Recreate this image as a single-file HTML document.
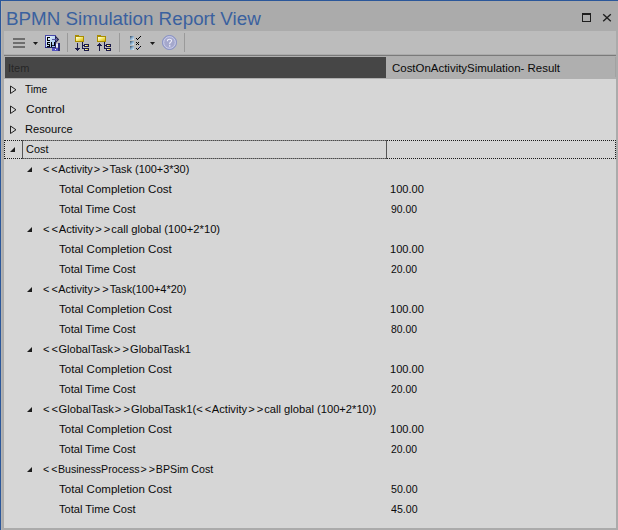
<!DOCTYPE html>
<html><head><meta charset="utf-8">
<style>
html,body{margin:0;padding:0;}
body{width:618px;height:530px;overflow:hidden;position:relative;background:#ababab;font-family:"Liberation Sans",sans-serif;}
.abs{position:absolute;}
.t{position:absolute;font-size:11px;line-height:20px;height:20px;white-space:nowrap;color:#0a0a0a;transform-origin:0 0;}
.tri{position:absolute;}
.b1{margin-right:2px}.b2{margin-right:0.5px}.b3{margin-left:1px;margin-right:2px}.b4{margin-right:1px}
#title{position:absolute;left:6.00px;top:6px;font-size:18px;line-height:26px;color:#3a619f;white-space:nowrap;transform-origin:0 0;transform:scaleX(1.0450);}
</style></head><body>
<div class="abs" style="left:0;top:0;width:618px;height:1px;background:#2b579a"></div>
<div class="abs" style="left:0;top:0;width:1px;height:530px;background:#2b579a"></div>
<div class="abs" style="left:1px;top:1px;width:1px;height:529px;background:#b3b3b3"></div>
<div id="title">BPMN Simulation Report View</div>
<!-- window buttons -->
<div class="abs" style="left:582px;top:13px;width:7px;height:6px;border:1px solid #1e1e1e;border-top-width:2px"></div>
<svg class="abs" style="left:602px;top:13px" width="10" height="10"><path d="M1.2 1.3 L8.8 8.2 M8.8 1.3 L1.2 8.2" stroke="#1e1e1e" stroke-width="1.35"/></svg>
<!-- toolbar -->
<div class="abs" style="left:4px;top:31px;width:612px;height:23px;background:#bcbcbc"></div>
<svg class="abs" style="left:0;top:0" width="618" height="56" viewBox="0 0 618 56">
<defs>
<linearGradient id="fy" x1="0" y1="0" x2="1" y2="1"><stop offset="0" stop-color="#ffffff"/><stop offset="0.35" stop-color="#f8f090"/><stop offset="1" stop-color="#dcbc00"/></linearGradient>
<linearGradient id="ry" x1="0" y1="0" x2="1" y2="0"><stop offset="0" stop-color="#fffff0"/><stop offset="1" stop-color="#e0c000"/></linearGradient>
<linearGradient id="cb" x1="0" y1="0" x2="1" y2="1"><stop offset="0" stop-color="#f2f8ff"/><stop offset="1" stop-color="#8fbce8"/></linearGradient>
<linearGradient id="sq" x1="0" y1="0" x2="1" y2="1"><stop offset="0" stop-color="#3a4654"/><stop offset="0.5" stop-color="#8cb0d0"/><stop offset="1" stop-color="#e4f4ff"/></linearGradient>
</defs>
<g shape-rendering="crispEdges">
<rect x="13" y="38" width="12" height="2" fill="#6e6e6e"/>
<rect x="13" y="42" width="12" height="2" fill="#6e6e6e"/>
<rect x="13" y="46" width="12" height="2" fill="#6e6e6e"/>
<rect x="67" y="33" width="1" height="19" fill="#9a9a9a"/>
<rect x="119" y="33" width="1" height="19" fill="#9a9a9a"/>
<rect x="184" y="33" width="1" height="19" fill="#9a9a9a"/>
</g>
<path d="M33 42 H38 L35.5 45 Z" fill="#1a1a1a"/>
<path d="M150 42 H155 L152.5 45 Z" fill="#1a1a1a"/>
<!-- CSV icon -->
<g shape-rendering="crispEdges">
<rect x="45" y="35" width="11" height="13" fill="#4848a8"/>
<rect x="46" y="36" width="9" height="11" fill="url(#cb)"/>
<rect x="55" y="36" width="1" height="12" fill="#24246c"/>
<rect x="45" y="47" width="11" height="1" fill="#24246c"/>
<!-- C -->
<rect x="47" y="37" width="3" height="1" fill="#000"/>
<rect x="47" y="38" width="1" height="2" fill="#000"/>
<rect x="47" y="40" width="3" height="1" fill="#000"/>
<!-- S -->
<rect x="47" y="42" width="3" height="1" fill="#000"/>
<rect x="47" y="43" width="1" height="1" fill="#000"/>
<rect x="47" y="44" width="3" height="1" fill="#000"/>
<rect x="49" y="45" width="1" height="1" fill="#000"/>
<rect x="47" y="46" width="3" height="1" fill="#000"/>
<!-- W -->
<rect x="51" y="42" width="1" height="5" fill="#000"/>
<rect x="54" y="42" width="1" height="4" fill="#000"/>
<rect x="52" y="45" width="2" height="1" fill="#202040"/>
<!-- arrow -->
<rect x="52" y="39" width="5" height="1" fill="#5a5aa8"/>
</g>
<path d="M55.6 36.6 L58.3 39.5 L55.6 42.4" fill="none" stroke="#20204c" stroke-width="1.3"/>
<g shape-rendering="crispEdges">
<!-- disk -->
<rect x="58" y="43" width="2" height="8" fill="#2a2a78"/>
<rect x="56" y="44" width="2" height="3" fill="#e8ecff"/>
<rect x="52" y="48" width="6" height="3" fill="#5252c0"/>
<rect x="55" y="49" width="1" height="1" fill="#ffffff"/>
</g>
<!-- folder icons -->
<g shape-rendering="crispEdges">
<rect x="75" y="35" width="4" height="1" fill="#a88c00"/>
<rect x="75" y="36" width="9" height="6" fill="#a88c00"/>
<rect x="76" y="37" width="7" height="4" fill="url(#fy)"/>
<rect x="97" y="35" width="4" height="1" fill="#a88c00"/>
<rect x="97" y="36" width="9" height="6" fill="#a88c00"/>
<rect x="98" y="37" width="7" height="4" fill="url(#fy)"/>
<!-- down arrow -->
<rect x="77" y="43" width="1" height="8" fill="#1a1a48"/>
<rect x="75" y="48" width="5" height="1" fill="#1a1a48"/>
<rect x="76" y="49" width="3" height="1" fill="#1a1a48"/>
<!-- up arrow -->
<rect x="99" y="43" width="1" height="8" fill="#1a1a48"/>
<rect x="97" y="45" width="5" height="1" fill="#1a1a48"/>
<rect x="98" y="44" width="3" height="1" fill="#1a1a48"/>
<!-- tree 1 -->
<rect x="82" y="42" width="1" height="7" fill="#1a1a48"/>
<rect x="82" y="45" width="2" height="1" fill="#1a1a48"/>
<rect x="82" y="48" width="2" height="1" fill="#1a1a48"/>
<rect x="84" y="44" width="5" height="3" fill="#1a1a48"/>
<rect x="85" y="45" width="3" height="1" fill="url(#ry)"/>
<rect x="84" y="48" width="5" height="3" fill="#1a1a48"/>
<rect x="85" y="49" width="3" height="1" fill="url(#ry)"/>
<!-- tree 2 -->
<rect x="104" y="42" width="1" height="7" fill="#1a1a48"/>
<rect x="104" y="45" width="2" height="1" fill="#1a1a48"/>
<rect x="104" y="48" width="2" height="1" fill="#1a1a48"/>
<rect x="106" y="44" width="5" height="3" fill="#1a1a48"/>
<rect x="107" y="45" width="3" height="1" fill="url(#ry)"/>
<rect x="106" y="48" width="5" height="3" fill="#1a1a48"/>
<rect x="107" y="49" width="3" height="1" fill="url(#ry)"/>
</g>
<!-- checklist -->
<g shape-rendering="crispEdges">
<rect x="130" y="36" width="4" height="4" fill="url(#sq)"/>
<rect x="130" y="41" width="4" height="4" fill="url(#sq)"/>
<rect x="130" y="46" width="4" height="4" fill="url(#sq)"/>
<rect x="136" y="38" width="1" height="1" fill="#000"/><rect x="137" y="39" width="1" height="1" fill="#000"/><rect x="138" y="38" width="1" height="1" fill="#000"/><rect x="139" y="37" width="1" height="1" fill="#000"/><rect x="140" y="36" width="1" height="1" fill="#000"/>
<rect x="136" y="42" width="1" height="1" fill="#000"/><rect x="138" y="42" width="1" height="1" fill="#000"/><rect x="137" y="43" width="1" height="1" fill="#000"/><rect x="136" y="44" width="1" height="1" fill="#000"/><rect x="138" y="44" width="1" height="1" fill="#000"/>
<rect x="136" y="48" width="1" height="1" fill="#000"/><rect x="137" y="49" width="1" height="1" fill="#000"/><rect x="138" y="48" width="1" height="1" fill="#000"/><rect x="139" y="47" width="1" height="1" fill="#101080"/><rect x="140" y="46" width="1" height="1" fill="#000"/>
</g>
<!-- help -->
<circle cx="169.5" cy="42.5" r="7" fill="#a5a8cc" stroke="#8690c6" stroke-width="1"/>
<circle cx="169.5" cy="42.5" r="5.8" fill="none" stroke="#cdd0ec" stroke-width="1"/>
<path d="M167.5 41.3 V40.2 Q167.5 39.2 169.5 39.2 Q171.6 39.2 171.6 40.6 Q171.6 41.8 169.8 43 V44.2" fill="none" stroke="#eeeefa" stroke-width="1.1"/>
<rect x="169" y="45.2" width="1.4" height="1.4" fill="#eeeefa"/>
</svg>
<!-- header -->
<div class="abs" style="left:4px;top:55px;width:612px;height:1px;background:#7a7a7a"></div>
<div class="abs" style="left:4px;top:56px;width:612px;height:23px;background:#afafaf"></div>
<div class="abs" style="left:5px;top:57px;width:381px;height:21px;background:#464646"></div>
<div class="abs" style="left:615px;top:57px;width:1px;height:20px;background:#a2a2a2"></div>
<div class="t" style="left:8px;top:58px;color:#262626">Item</div>
<div class="t" style="left:391.80px;top:58px;transform:scaleX(1.0410)">CostOnActivitySimulation- Result</div>

<!-- content -->
<div class="abs" style="left:4px;top:79px;width:612px;height:449px;background:#d6d6d6"></div>
<!-- focus row -->
<div class="abs" style="left:4px;top:140px;width:612px;height:19px;box-sizing:border-box;border:1px dotted #1a1a1a"></div>
<div class="abs" style="left:22px;top:140px;width:364px;height:1px;background:repeating-linear-gradient(90deg,#8e8e8e 0 1px,#4a4a4a 1px 2px)"></div>
<div class="abs" style="left:22px;top:158px;width:364px;height:1px;background:repeating-linear-gradient(90deg,#8e8e8e 0 1px,#4a4a4a 1px 2px)"></div>
<div class="abs" style="left:22px;top:140px;width:1px;height:19px;background:#555"></div>
<div class="abs" style="left:386px;top:140px;width:1px;height:19px;background:#555"></div>
<svg class="tri" style="left:10px;top:85px" width="10" height="10"><path d="M0.5 1 L0.5 8.5 L6 4.75 Z" fill="none" stroke="#222" stroke-width="1" stroke-linejoin="miter"/></svg>
<div class="t" style="left:25.40px;top:79px;transform:scaleX(0.9257)">Time</div>
<svg class="tri" style="left:10px;top:105px" width="10" height="10"><path d="M0.5 1 L0.5 8.5 L6 4.75 Z" fill="none" stroke="#222" stroke-width="1" stroke-linejoin="miter"/></svg>
<div class="t" style="left:25.80px;top:99px;transform:scaleX(1.0917)">Control</div>
<svg class="tri" style="left:10px;top:125px" width="10" height="10"><path d="M0.5 1 L0.5 8.5 L6 4.75 Z" fill="none" stroke="#222" stroke-width="1" stroke-linejoin="miter"/></svg>
<div class="t" style="left:24.80px;top:119px;transform:scaleX(1.0131)">Resource</div>
<svg class="tri" style="left:10px;top:146px" width="8" height="8"><path d="M0 6 L5 6 L5 1 Z" fill="#1e1e1e"/></svg>
<div class="t" style="left:25.50px;top:139px;transform:scaleX(0.9924)">Cost</div>
<svg class="tri" style="left:27px;top:166px" width="8" height="8"><path d="M0 6 L5 6 L5 1 Z" fill="#1e1e1e"/></svg>
<div class="t" style="left:43.40px;top:159px;transform:scaleX(0.9920)"><span class="b1">&lt;</span><span class="b2">&lt;</span>Activity<span class="b3">&gt;</span><span class="b4">&gt;</span>Task (100+3*30)</div>
<div class="t" style="left:59.10px;top:179px;transform:scaleX(1.0482)">Total Completion Cost</div>
<div class="t" style="left:390.00px;top:179px;transform:scaleX(1.0066)">100.00</div>
<div class="t" style="left:59.10px;top:199px;transform:scaleX(1.0106)">Total Time Cost</div>
<div class="t" style="left:391.00px;top:199px;transform:scaleX(0.9424)">90.00</div>
<svg class="tri" style="left:27px;top:226px" width="8" height="8"><path d="M0 6 L5 6 L5 1 Z" fill="#1e1e1e"/></svg>
<div class="t" style="left:43.40px;top:219px;transform:scaleX(1.0189)"><span class="b1">&lt;</span><span class="b2">&lt;</span>Activity<span class="b3">&gt;</span><span class="b4">&gt;</span>call global (100+2*10)</div>
<div class="t" style="left:59.10px;top:239px;transform:scaleX(1.0482)">Total Completion Cost</div>
<div class="t" style="left:390.00px;top:239px;transform:scaleX(1.0066)">100.00</div>
<div class="t" style="left:59.10px;top:259px;transform:scaleX(1.0106)">Total Time Cost</div>
<div class="t" style="left:391.00px;top:259px;transform:scaleX(0.9424)">20.00</div>
<svg class="tri" style="left:27px;top:286px" width="8" height="8"><path d="M0 6 L5 6 L5 1 Z" fill="#1e1e1e"/></svg>
<div class="t" style="left:43.40px;top:279px;transform:scaleX(0.9932)"><span class="b1">&lt;</span><span class="b2">&lt;</span>Activity<span class="b3">&gt;</span><span class="b4">&gt;</span>Task(100+4*20)</div>
<div class="t" style="left:59.10px;top:299px;transform:scaleX(1.0482)">Total Completion Cost</div>
<div class="t" style="left:390.00px;top:299px;transform:scaleX(1.0066)">100.00</div>
<div class="t" style="left:59.10px;top:319px;transform:scaleX(1.0106)">Total Time Cost</div>
<div class="t" style="left:391.00px;top:319px;transform:scaleX(0.9424)">80.00</div>
<svg class="tri" style="left:27px;top:346px" width="8" height="8"><path d="M0 6 L5 6 L5 1 Z" fill="#1e1e1e"/></svg>
<div class="t" style="left:43.40px;top:339px;transform:scaleX(1.0045)"><span class="b1">&lt;</span><span class="b2">&lt;</span>GlobalTask<span class="b3">&gt;</span><span class="b4">&gt;</span>GlobalTask1</div>
<div class="t" style="left:59.10px;top:359px;transform:scaleX(1.0482)">Total Completion Cost</div>
<div class="t" style="left:390.00px;top:359px;transform:scaleX(1.0066)">100.00</div>
<div class="t" style="left:59.10px;top:379px;transform:scaleX(1.0106)">Total Time Cost</div>
<div class="t" style="left:391.00px;top:379px;transform:scaleX(0.9424)">20.00</div>
<svg class="tri" style="left:27px;top:406px" width="8" height="8"><path d="M0 6 L5 6 L5 1 Z" fill="#1e1e1e"/></svg>
<div class="t" style="left:43.40px;top:399px;transform:scaleX(1.0150)"><span class="b1">&lt;</span><span class="b2">&lt;</span>GlobalTask<span class="b3">&gt;</span><span class="b4">&gt;</span>GlobalTask1(<span class="b1">&lt;</span><span class="b2">&lt;</span>Activity<span class="b3">&gt;</span><span class="b4">&gt;</span>call global (100+2*10))</div>
<div class="t" style="left:59.10px;top:419px;transform:scaleX(1.0482)">Total Completion Cost</div>
<div class="t" style="left:390.00px;top:419px;transform:scaleX(1.0066)">100.00</div>
<div class="t" style="left:59.10px;top:439px;transform:scaleX(1.0106)">Total Time Cost</div>
<div class="t" style="left:391.00px;top:439px;transform:scaleX(0.9424)">20.00</div>
<svg class="tri" style="left:27px;top:466px" width="8" height="8"><path d="M0 6 L5 6 L5 1 Z" fill="#1e1e1e"/></svg>
<div class="t" style="left:43.40px;top:459px;transform:scaleX(0.9678)"><span class="b1">&lt;</span><span class="b2">&lt;</span>BusinessProcess<span class="b3">&gt;</span><span class="b4">&gt;</span>BPSim Cost</div>
<div class="t" style="left:59.10px;top:479px;transform:scaleX(1.0482)">Total Completion Cost</div>
<div class="t" style="left:391.00px;top:479px;transform:scaleX(0.9640)">50.00</div>
<div class="t" style="left:59.10px;top:499px;transform:scaleX(1.0106)">Total Time Cost</div>
<div class="t" style="left:391.00px;top:499px;transform:scaleX(0.9640)">45.00</div>

</body></html>
